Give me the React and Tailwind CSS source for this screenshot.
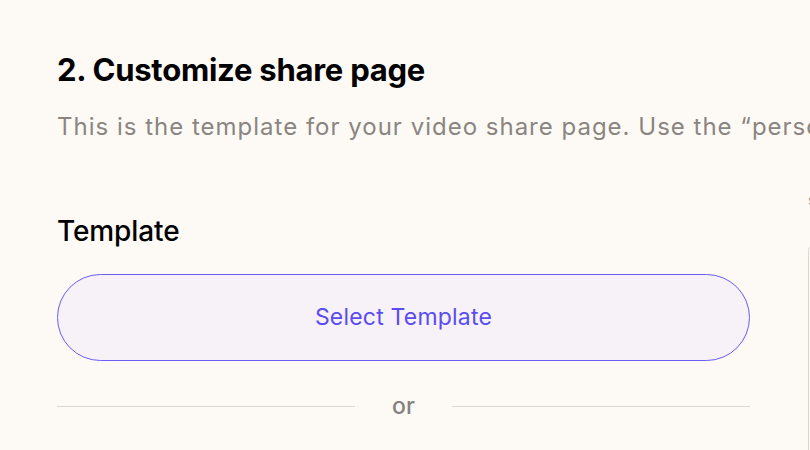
export default function App() {
  return (
    <div
      className="flex h-[450px] w-[810px] overflow-hidden bg-[#fdfaf6] text-black"
      style={{ fontFamily: "Inter, 'Noto Sans', sans-serif" }}
    >
      <div className="w-[693px] shrink-0 pl-[57px] pt-[52px] box-content">
        <h2 className="text-[31px] font-bold leading-[36px] tracking-[-0.25px]">2. Customize share page</h2>
        <p className="mt-[23px] whitespace-nowrap text-[24px] leading-[32px] tracking-[1px] text-[#8a8581]">
          This is the template for your video share page. Use the “personalize” options to tailor it.
        </p>

        <h3 className="mt-[71px] text-[28px] font-medium leading-[34px] tracking-[-0.1px]">Template</h3>
        <button className="mt-[26px] flex h-[87px] w-full items-center justify-center rounded-full border border-[#6b5cf6] bg-[#f6f2f7] text-[23px] tracking-[0.2px] text-[#5b4cf2]">
          Select Template
        </button>

        <div className="mt-[30px] flex items-center">
          <div className="h-px flex-1 bg-[#dcd8d2]" />
          <span className="w-[97px] text-center text-[23px] font-medium leading-[30px] text-[#858180]">or</span>
          <div className="h-px flex-1 bg-[#dcd8d2]" />
        </div>
      </div>

      <div className="ml-[58px] flex flex-col pt-[192px]">
        <span className="text-[14px] leading-[16px] text-[#9a958f]">s</span>
        <div className="mt-[37px] h-[260px] w-[200px] rounded-tl-[6px] border-l border-t border-[#dad5cf]" />
      </div>
    </div>
  );
}
